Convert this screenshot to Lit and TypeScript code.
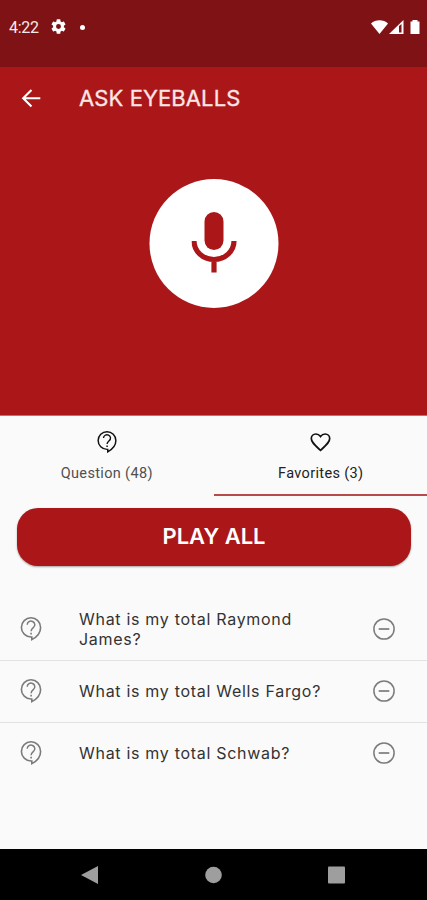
import { LitElement, html, css, svg } from "lit";
import { customElement, property } from "lit/decorators.js";

const support = html`<svg class="support" viewBox="0 0 24 26" fill="none" stroke="currentColor">
  ${svg`<path d="M12.800 21h-.8a9.600 9.600 0 1 1 9.600-9.600c0 4.600-3.300 9.300-8.800 12.200z" stroke-width="1.600"/>
  <path d="M8.200 8.700a3.800 3.600 0 1 1 6.200 2.800c-1.400 1.200-2.300 1.900-2.300 3.800" stroke-width="1.500"/>
  <path d="M12.100 16.700v1.700" stroke-width="1.600"/>`}
</svg>`;

@customElement("question-row")
export class QuestionRow extends LitElement {
  @property() text = "";

  static styles = css`
    :host {
      display: flex;
      align-items: center;
      box-sizing: border-box;
      height: 62px;
      padding-bottom: 2px;
      border-bottom: 1px solid #e2e2e2;
      color: #7b7b7b;
    }
    :host(:last-of-type) { border-color: transparent; }
    .support { width: 24px; height: 26px; margin-left: 18.5px; flex: none; }
    .text {
      width: 250px;
      margin: 1px 0 0 36.5px;
      font: 400 16px/20.5px Inter, sans-serif;
      letter-spacing: 0.7px;
      color: #333;
    }
    .minus { width: 24px; height: 24px; margin-left: 43px; flex: none; }
  `;

  render() {
    return html`${support}
      <div class="text">${this.text}</div>
      <svg class="minus" viewBox="0 0 24 24" fill="none" stroke="currentColor">
        <circle cx="12" cy="12" r="10.1" stroke-width="1.5" />
        <path d="M6.7 12h10.6" stroke-width="1.7" />
      </svg>`;
  }
}

@customElement("app-root")
export class AppRoot extends LitElement {
  static styles = css`
    :host {
      display: flex;
      flex-direction: column;
      width: 427px;
      height: 900px;
      overflow: hidden;
      background: #fafafa;
      font-family: Roboto, sans-serif;
    }
    svg { display: block; flex: none; }
    .status {
      height: 67px;
      flex: none;
      box-sizing: border-box;
      padding: 18px 6px 0 9px;
      display: flex;
      align-items: flex-start;
      background: #7f1214;
      color: #fff;
    }
    .time { width: 42px; font-size: 16px; line-height: 20px; letter-spacing: -0.3px; color: #f7e9e9; }
    .gear { width: 15px; height: 15px; margin: 1px 1px 0 0; }
    .dot { width: 5px; height: 5px; border-radius: 50%; background: #fff; margin: 7px 0 0 13px; }
    .signals { width: 50px; height: 16px; margin: 1px 0 0 auto; }
    .hero {
      height: 348px;
      flex: none;
      background: #ab1719;
      border-bottom: 1px solid #c96a6b;
      display: flex;
      flex-direction: column;
      box-sizing: content-box;
    }
    .bar { display: flex; align-items: center; height: 62px; padding-left: 19px; color: #fff; }
    .back { width: 24px; height: 24px; }
    .title {
      margin-left: 36px;
      font: 400 22px/28px Inter, sans-serif;
      letter-spacing: 0.1px;
      color: #fbe6e6;
      -webkit-text-stroke: 0.3px #fbe6e6;
      white-space: nowrap;
    }
    .mic {
      width: 129px;
      height: 129px;
      border-radius: 50%;
      background: #fff;
      margin: 50px auto 0;
      transform: translateX(0.5px);
      display: flex;
      align-items: center;
      justify-content: center;
    }
    .mic svg { width: 46px; height: 62px; margin-bottom: 3px; }
    .tabs { display: flex; height: 80px; flex: none; }
    .tab {
      flex: 1;
      display: flex;
      flex-direction: column;
      align-items: center;
      box-sizing: border-box;
      padding-top: 14px;
      border-bottom: 2px solid transparent;
      color: #111;
    }
    .tab.active { border-color: #b64a4d; }
    .tab .support { width: 24px; height: 24px; }
    .heart { width: 24px; height: 24px; }
    .label { margin: 11px 0 0; font-size: 14.5px; line-height: 18px; letter-spacing: 0.35px; color: #505050; white-space: nowrap; }
    .active .label { margin-left: 1px; color: #222; }
    .play {
      height: 58px;
      flex: none;
      margin: 12px 16px 0 17px;
      border: 0;
      padding: 0 0 2px;
      border-radius: 21px;
      background: #ab1719;
      box-shadow: 0 1px 2px rgba(0, 0, 0, 0.35);
      color: #fff;
      font: 600 22px/54px Inter, sans-serif;
      text-align: center;
    }
    .list { margin-top: 33px; flex: 1; }
    .nav {
      height: 51px;
      flex: none;
      background: #000;
      display: flex;
      align-items: center;
      justify-content: space-between;
      padding: 0 82px 0 81px;
    }
    .nav svg { width: 17px; height: 18px; fill: #9e9e9e; }
  `;

  render() {
    return html`
      <div class="status">
        <span class="time">4:22</span>
        <svg class="gear" viewBox="2 2 20 20" fill="#fff">
          <path d="M19.14 12.94c.04-.3.06-.61.06-.94 0-.32-.02-.64-.07-.94l2.03-1.58a.49.49 0 0 0 .12-.61l-1.92-3.32a.49.49 0 0 0-.59-.22l-2.39.96c-.5-.38-1.03-.7-1.62-.94l-.36-2.54a.48.48 0 0 0-.48-.41h-3.84a.47.47 0 0 0-.47.41l-.36 2.54c-.59.24-1.13.57-1.62.94l-2.39-.96a.48.48 0 0 0-.59.22L2.74 8.87a.47.47 0 0 0 .12.61l2.03 1.58c-.05.3-.09.63-.09.94s.02.64.07.94l-2.03 1.58a.49.49 0 0 0-.12.61l1.92 3.32c.12.22.37.29.59.22l2.39-.96c.5.38 1.03.7 1.62.94l.36 2.54c.05.24.24.41.48.41h3.84c.24 0 .44-.17.47-.41l.36-2.54c.59-.24 1.13-.56 1.62-.94l2.39.96c.22.08.47 0 .59-.22l1.92-3.32a.47.47 0 0 0-.12-.61zM12 15.3a3.3 3.3 0 1 1 0-6.6 3.3 3.3 0 0 1 0 6.6z" />
        </svg>
        <span class="dot"></span>
        <svg class="signals" viewBox="0 0 50 16" fill="#fff">
          <path d="M0 4.6C4.6.2 12.4.2 17 4.6L8.5 15z" />
          <path d="M18 15 32.500 1v14z" />
          <path d="M28 7v6.500h2.500V5z" fill="#7f1214" />
          <path d="M39.500 2.500h2V1h5v1.500h2V15h-9z" />
        </svg>
      </div>
      <div class="hero">
        <div class="bar">
          <svg class="back" viewBox="0 0 24 24" fill="none" stroke="#fff" stroke-width="2.100">
            <path d="M21.300 12.300H4.500M12.500 4l-8.300 8.300 8.300 8.300" />
          </svg>
          <div class="title">ASK EYEBALLS</div>
        </div>
        <div class="mic">
          <svg viewBox="0 0 46 62" fill="#ab1719">
            <rect x="13" y="1" width="19" height="38" rx="9.500" />
            <path d="M2.500 30a20 18.500 0 0 0 40 0M22.500 48v13.500" fill="none" stroke="#ab1719" stroke-width="5.200" />
          </svg>
        </div>
      </div>
      <div class="tabs">
        <div class="tab">
          ${support}
          <div class="label">Question (48)</div>
        </div>
        <div class="tab active">
          <svg class="heart" viewBox="0 0 24 24" fill="none" stroke="currentColor" stroke-width="1.700">
            <path d="M12.500 20.300 11 19C5.800 14.300 3.300 12 3.300 8.600 3.300 6 5.300 4 7.900 4c1.700 0 3.400.9 4.600 2.500C13.700 4.900 15.400 4 17.100 4c2.600 0 4.600 2 4.600 4.600 0 3.400-2.500 5.700-7.700 10.400z" />
          </svg>
          <div class="label">Favorites (3)</div>
        </div>
      </div>
      <button class="play">PLAY ALL</button>
      <div class="list">
        <question-row text="What is my total Raymond James?"></question-row>
        <question-row text="What is my total Wells Fargo?"></question-row>
        <question-row text="What is my total Schwab?"></question-row>
      </div>
      <div class="nav">
        <svg viewBox="0 0 17 18"><path d="M0 9 17 0v18z" /></svg>
        <svg viewBox="0 0 17 18"><circle cx="8.500" cy="9" r="8.300" /></svg>
        <svg viewBox="0 0 17 18"><rect y=".5" width="17" height="17" rx="1" /></svg>
      </div>
    `;
  }
}
